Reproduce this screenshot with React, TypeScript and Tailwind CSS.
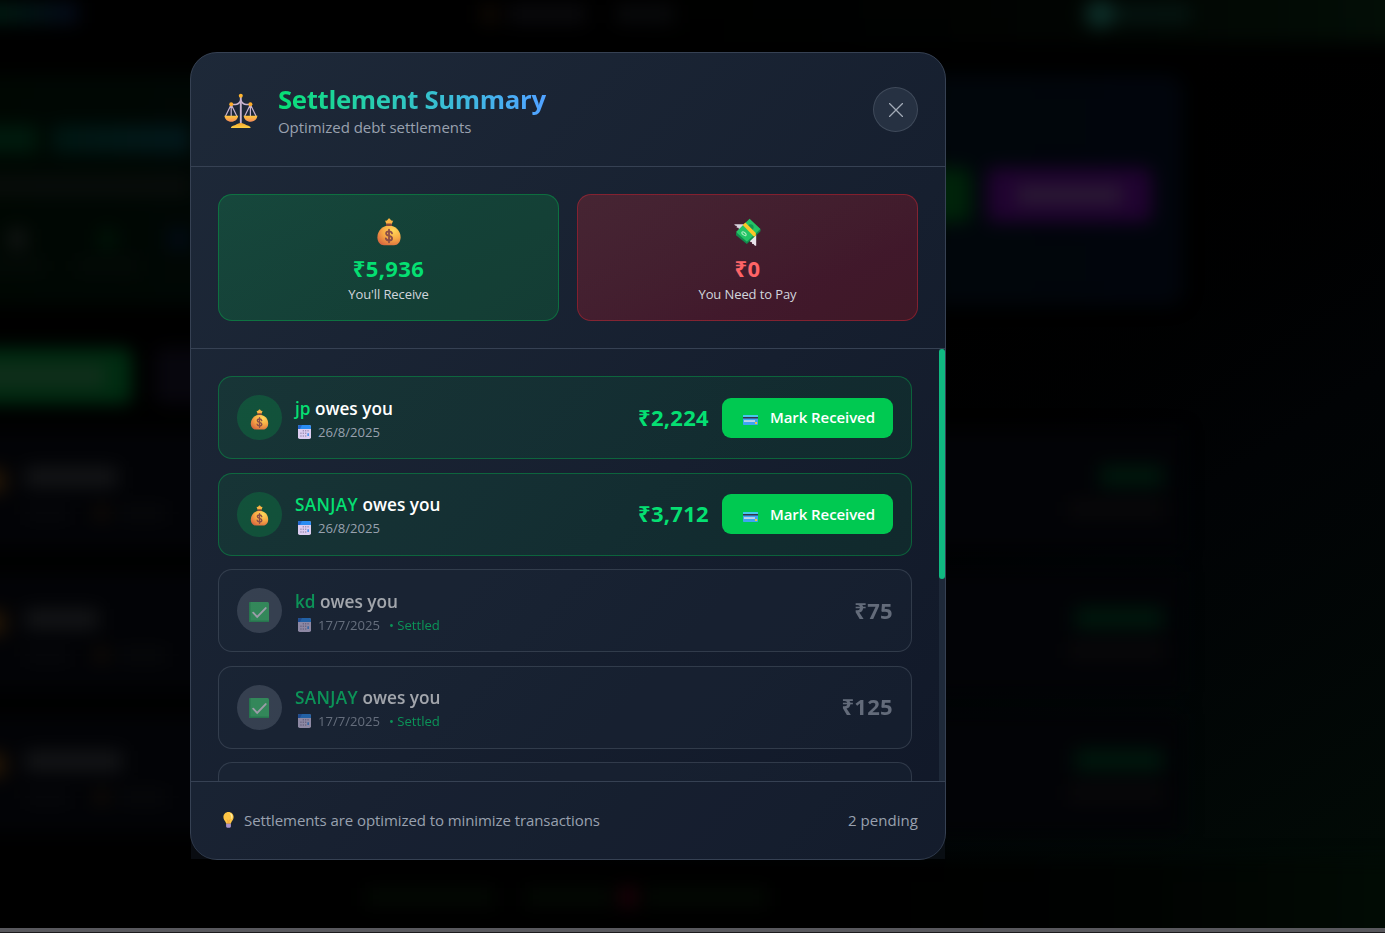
import React from "react";
import clsx from "clsx";

function Scales() {
  return (
    <svg width="34" height="36" viewBox="0 0 34 36" className="block shrink-0">
      <defs>
        <linearGradient id="sc-gold" x1="0" y1="0" x2="0" y2="1">
          <stop offset="0" stopColor="#ffc83d" />
          <stop offset="1" stopColor="#f58b5b" />
        </linearGradient>
        <linearGradient id="sc-base" x1="0" y1="0" x2="0" y2="1">
          <stop offset="0" stopColor="#f5a52c" />
          <stop offset="1" stopColor="#ffd045" />
        </linearGradient>
      </defs>
      <g fill="none" stroke="#c9b3cf" strokeLinecap="round" strokeLinejoin="round">
        <path d="M16.8 4v26.5" strokeWidth="1.9" />
        <path d="M8 11.5h3.3c2.6 0 4.2-1.6 5.5-4.2 1.3 2.6 2.9 4.2 5.5 4.2H26" strokeWidth="1.5" />
        <path d="M7.2 11.5 1.6 23M7.2 11.5 12.8 23M7.2 12v10.5M26.4 11.5 20.8 23M26.4 11.5 32 23M26.4 12v10.5" strokeWidth="1.2" />
      </g>
      <path d="M.4 22.800h13.800c-.5 3.800-3.300 6-6.900 6S.9 26.600.4 22.800zM19.600 22.800h13.800c-.5 3.800-3.300 6-6.900 6s-6.400-2.200-6.900-6z" fill="url(#sc-gold)" />
      <path d="M7 35c0-2 2.500-2.200 4.400-3 1.600-.8 3-2 5.400-2s3.800 1.200 5.400 2c1.900.8 4.400 1 4.400 3z" fill="url(#sc-base)" />
      <circle cx="16.800" cy="2.800" r="2" fill="#ffb52e" />
      <circle cx="7.200" cy="11.300" r="2" fill="#fbab2a" />
      <circle cx="26.400" cy="11.300" r="2" fill="#fbab2a" />
    </svg>
  );
}

function MoneyBag({ size }: { size: number }) {
  return (
    <svg width={size} height={size} viewBox="0 0 28 28" className="block shrink-0">
      <defs>
        <radialGradient id="bag" cx="0.68" cy="0.25" r="0.85">
          <stop offset="0" stopColor="#ffd858" />
          <stop offset="0.5" stopColor="#f8ab45" />
          <stop offset="1" stopColor="#d9683f" />
        </radialGradient>
      </defs>
      <path d="M10 2.400c1 .5 1.800.3 2.400-.3.500-.8.900-1.500 1.700-1.500s1.200.7 1.700 1.500c.6.6 1.400.8 2.400.3l-1.700 4.400h-4.800z" fill="#fbb543" />
      <path d="M14 7.600c6.500 0 11.600 5.300 11.600 11.600 0 4.800-2.900 8-6.500 8H8.900c-3.600 0-6.500-3.200-6.500-8C2.400 12.900 7.500 7.600 14 7.600z" fill="url(#bag)" />
      <rect x="10.900" y="5.600" width="6.200" height="2.400" rx="1.100" fill="#8a4b3c" />
      <path d="M17 15.400c-.3-1.300-1.400-2.100-3-2.100-1.700 0-2.900.9-2.900 2.200 0 3.200 6 1.400 6 4.700 0 1.400-1.300 2.300-3.100 2.300-1.700 0-2.900-.8-3.200-2.200M14 11.600v12.700" fill="none" stroke="#8b4d48" strokeWidth="1.800" strokeLinecap="round" />
    </svg>
  );
}

function WingedMoney() {
  return (
    <svg width="27" height="28" viewBox="0 0 27 28" className="block shrink-0">
      <path d="M.3 6.200h9.500l-3 6.300-2.200-1.200.2-1.300-2.200-.6.300-1.300C1.400 7.800.6 7.100.3 6.200z" fill="#d9d4de" />
      <path d="M22.200 16.200v11.600c-1.500-.1-2.400-.8-2.500-1.900l-1.500.1-.2-1.800-1.700-.2-.3-2.200z" fill="#e8e3ea" />
      <path d="M2 15.300 16.300 2.100l10.200 9.200v2L12.800 26 2 17.300z" fill="#128a4c" />
      <path d="M15.600.8 26.400 11 12.900 23.800 2 14.100z" fill="#23c465" />
      <circle cx="16.600" cy="9.300" r="3" fill="#159652" />
      <ellipse cx="10" cy="15.700" rx="2.500" ry="1.300" transform="rotate(40 10 15.700)" fill="none" stroke="#a9edbd" strokeWidth="1.100" />
      <path d="m8.700 6.900 2.700-2.400L21.800 15v2.700l-1.700 1z" fill="#fdc629" />
    </svg>
  );
}

function Calendar() {
  return (
    <svg width="13" height="14" viewBox="0 0 13 14" className="block shrink-0">
      <rect width="13" height="14" rx="1.800" fill="#dccdf0" />
      <path d="M0 4V1.800A1.800 1.800 0 0 1 1.800 0h9.400A1.800 1.800 0 0 1 13 1.800V4z" fill="#2a8cf2" />
      <path d="M0 4V1.800A1.800 1.800 0 0 1 1.800 0H4L2 4z" fill="#2467cf" />
      <g fill="#a294b8">
        <path d="M4.700 5H6v1.500H4.700zM7 5h1.300v1.500H7zM9.400 5h1.300v1.500H9.400zM2.300 7.600h1.300v1.500H2.300zM4.700 7.600H6v1.500H4.700zM7 7.600h1.300v1.500H7zM2.300 10.300h1.300v1.500H2.300zM4.700 10.300H6v1.500H4.700zM7 10.300h1.300v1.500H7z" />
      </g>
      <path d="M9.400 8.300h1.500v2.600H9.400z" fill="#3f8ff0" />
    </svg>
  );
}

function Card() {
  return (
    <svg width="15" height="10" viewBox="0 0 15 10" className="block shrink-0">
      <rect width="15" height="10" rx="0.800" fill="#3fa4f2" />
      <path d="M0 .8A.8.800 0 0 1 .8 0h13.400a.8.800 0 0 1 .8.800V2H0z" fill="#45c8ec" />
      <path d="M0 2h15v1.500H0z" fill="#35344a" />
      <path d="M1 5.100h11v1.900H1z" fill="#b9d4ea" />
      <path d="M12.100 7h2v2h-2z" fill="#f9c440" />
    </svg>
  );
}

function Check() {
  return (
    <svg width="20" height="20" viewBox="0 0 20 20" className="block shrink-0">
      <rect width="20" height="20" rx="1.500" fill="#46cb76" />
      <path d="M0 1.500V18.500A1.500 1.500 0 0 0 1.500 20H20v-1.500H1.500V0A1.500 1.500 0 0 0 0 1.500z" fill="#32ad62" />
      <path d="m4.200 10.700 4 4.100 8.500-8.700" fill="none" stroke="#f4eef8" strokeWidth="1.900" strokeLinecap="round" />
    </svg>
  );
}

function Bulb() {
  return (
    <svg width="11" height="16" viewBox="0 0 11 16" className="block shrink-0">
      <path d="M5.500 0C8.500 0 10.600 2.200 10.600 5c0 2.200-1.200 3.300-2 4.800-.4.700-.6 1.300-.7 2H3.100c-.1-.7-.3-1.300-.7-2C1.600 8.300.4 7.200.4 5 .4 2.200 2.500 0 5.500 0z" fill="#fdc545" />
      <path d="M6.500 1C8.400 1.400 9.600 2.900 9.500 4.800c0 1.200-.6 2-1.200 2.600C8.500 5 8 2.700 6.500 1z" fill="#fff0a0" />
      <path d="M4 7.500 5 9v2.800h1V9l1-1.500" fill="none" stroke="#f59a35" strokeWidth="0.700" />
      <path d="M3.100 11.800h4.800v2.500c0 1-.8 1.500-2.400 1.500s-2.400-.5-2.400-1.500z" fill="#ab93c9" />
    </svg>
  );
}

function EntryBackdrop({ name, amount }: { name: string; amount: string }) {
  return (
    <div className="mb-[22px] -ml-8 flex h-[120px] w-[1215px] justify-between bg-[#020306] pt-[35px] pr-5">
      <div className="flex">
        <div className="mt-[4px] h-[24px] w-[38px] bg-[#241606]" />
        <div className="ml-[19px] flex flex-col">
          <div className={clsx("mt-[2px] h-[20px] bg-[#141517]", name)} />
          <div className="mt-[20px] flex h-[12px]">
            <div className="w-[45px] bg-[#07080b]" />
            <div className="ml-[25px] w-[12px] bg-[#1a1105]" />
            <div className="ml-[12px] w-[48px] bg-[#08090b]" />
          </div>
        </div>
      </div>
      <div className="flex flex-col items-end">
        <div className={clsx("h-[22px] bg-[#00170c]", amount)} />
        <div className="mt-[14px] h-[16px] w-[95px] bg-[#090809]" />
      </div>
    </div>
  );
}

function Backdrop() {
  return (
    <div className="flex h-[928px] w-full flex-col overflow-hidden bg-linear-to-br from-black from-40% via-[#010305] via-70% to-[#020c06]">
      <div className="flex w-full flex-col blur-[9px]">
        <div className="-mt-8 -mr-8 -ml-8 flex h-[74px] items-start bg-linear-to-r from-black from-30% to-[#030f07] pt-8">
          <div className="mt-[3px] h-[20px] w-[110px] bg-linear-to-r from-[#001c12] from-30% to-[#050a1c]" />
          <div className="mt-[5px] ml-[404px] h-[18px] w-[14px] bg-[#140c05]" />
          <div className="mt-[5px] ml-[12px] h-[18px] w-[78px] bg-[#0a0a0d]" />
          <div className="mt-[5px] ml-[30px] h-[18px] w-[58px] bg-[#090a0c]" />
          <div className="ml-[411px] h-[28px] w-[30px] rounded-full bg-[#0d2f29]" />
          <div className="mt-[4px] h-[20px] w-[76px] bg-[#051410]" />
        </div>
        <div className="mt-[33px] -ml-8 flex h-[230px] w-[1215px] justify-between rounded-r-2xl bg-linear-to-r from-[#000702] via-[#010708] to-[#01050c]">
          <div className="flex w-[222px] flex-col">
            <div className="mt-[50px] flex h-[28px] gap-[14px]">
              <div className="w-[70px] bg-[#001a0d]" />
              <div className="w-[138px] bg-linear-to-r from-[#001712] to-[#03181c]" />
            </div>
            <div className="mt-[24px] h-[18px] w-full bg-[#090d0b]" />
            <div className="mt-[34px] flex h-[20px]">
              <div className="ml-[40px] w-[18px] bg-[#121514]" />
              <div className="ml-[73px] w-[18px] bg-[#001507]" />
              <div className="ml-[52px] w-[22px] bg-[#020b16]" />
            </div>
            <div className="mt-[10px] flex h-[14px] gap-[30px]">
              <div className="w-[77px] bg-[#040a07]" />
              <div className="w-[64px] bg-[#040a07]" />
            </div>
          </div>
          <div className="mt-[93px] mr-[31px] flex h-[54px] gap-[16px]">
            <div className="w-[110px] rounded-lg bg-[#00230a]" />
            <div className="flex w-[165px] items-center justify-center rounded-lg bg-[#200330]">
              <div className="h-[18px] w-[105px] bg-[#2a1b33]" />
            </div>
          </div>
        </div>
        <div className="mt-[43px] -ml-8 flex h-[56px] gap-[23px]">
          <div className="flex w-[164px] items-center rounded-r-lg bg-[#002c11]">
            <div className="h-[22px] w-[137px] bg-[#112d1b]" />
          </div>
          <div className="w-[120px] rounded-lg bg-[#07060d]" />
        </div>
        <div className="mt-[26px] flex flex-col">
          <EntryBackdrop name="w-[92px]" amount="w-[63px]" />
          <EntryBackdrop name="w-[73px]" amount="w-[88px]" />
          <EntryBackdrop name="w-[97px]" amount="w-[88px]" />
        </div>
        <div className="mt-[4px] -mr-8 flex h-[100px] bg-linear-to-r from-black from-50% to-[#010d05]">
          <div className="mt-[28px] ml-[365px] h-[18px] w-[130px] bg-[#030903]" />
          <div className="mt-[28px] ml-[30px] h-[18px] w-[87px] bg-[#030903]" />
          <div className="mt-[28px] ml-[8px] h-[18px] w-[16px] bg-[#22030a]" />
          <div className="mt-[28px] ml-[9px] h-[18px] w-[122px] bg-[#030903]" />
        </div>
      </div>
    </div>
  );
}

type Entry = { name: string; tracking: string; date: string; amount: string; settled?: boolean };

const entries: Entry[] = [
  { name: "jp", tracking: "", date: "26/8/2025", amount: "₹2,224" },
  { name: "SANJAY", tracking: "tracking-[0.35px]", date: "26/8/2025", amount: "₹3,712" },
  { name: "kd", tracking: "", date: "17/7/2025", amount: "₹75", settled: true },
  { name: "SANJAY", tracking: "tracking-[0.35px]", date: "17/7/2025", amount: "₹125", settled: true },
];

function EntryRow({ name, tracking, date, amount, settled }: Entry) {
  return (
    <div
      className={clsx(
        "flex h-[83px] shrink-0 items-center rounded-[14px] border px-[18px]",
        settled ? "border-gray-600/90 bg-gray-800/50 opacity-60" : "border-green-500/35 bg-linear-to-r from-green-500/10 to-green-600/10",
      )}
    >
      <div className={clsx("flex size-[45px] items-center justify-center rounded-full", settled ? "bg-gray-600" : "bg-green-500/20")}>
        {settled ? <div className="pt-[2px] pr-[1px]"><Check /></div> : <div className="pt-[3px]"><MoneyBag size={21} /></div>}
      </div>
      <div className="ml-[13px] flex grow flex-col pt-[2px]">
        <div className="h-[25px] text-[17.200px] leading-[25px] font-semibold whitespace-pre text-white">
          <span className={clsx("text-green-400", tracking)}>{name}</span> owes you
        </div>
        <div className="flex h-[21px] items-center pt-[1px] pl-[3px] text-[13.100px] leading-[20px] text-gray-400">
          <Calendar />
          <span className="ml-[7px]">{date}</span>
          {settled && <span className="ml-[9px] text-green-400">• Settled</span>}
        </div>
      </div>
      <div className={clsx("pb-[2px] text-[22px] leading-[30px] font-bold tracking-[0.3px]", settled ? "text-gray-400" : "text-green-400")}>{amount}</div>
      {!settled && (
        <button className="ml-[13px] flex h-[40px] w-[171px] items-center rounded-[9px] bg-green-500 pl-[21px] text-[15px] font-semibold text-white">
          <div className="pt-[5px]"><Card /></div>
          <span className="ml-[12px] tracking-[-0.080px] whitespace-nowrap">Mark Received</span>
        </button>
      )}
    </div>
  );
}

export default function App() {
  return (
    <div className="relative h-[933px] w-full overflow-hidden bg-[#1c1b1e] font-['Open_Sans','Noto_Sans',sans-serif]">
      <Backdrop />
      <div className="h-[4px] bg-[#58585d]" />

      <div className="absolute inset-0 pt-[52px] pl-[190px]">
        <div className="flex h-[808px] w-[756px] flex-col rounded-[27px] border border-gray-700 bg-linear-to-br from-gray-800 to-gray-900">
          <header className="flex h-[114px] items-center border-b border-gray-700 px-[27px]">
            <div className="w-[60px] pt-[2px] pl-[6px]"><Scales /></div>
            <div className="flex grow flex-col items-start pt-[2px]">
              <h2 className="h-[32px] bg-linear-to-r from-green-400 to-blue-400 bg-clip-text text-[25.800px] leading-[32px] font-bold tracking-[-0.36px] whitespace-nowrap text-transparent">
                Settlement Summary
              </h2>
              <p className="h-[24px] text-[15px] leading-[24px] tracking-[-0.05px] text-gray-400">Optimized debt settlements</p>
            </div>
            <button className="flex size-[45px] items-center justify-center rounded-full border border-gray-600/70 bg-gray-700/50">
              <svg width="14" height="14" viewBox="0 0 14 14" fill="none" stroke="#a3abb7" strokeWidth="1.300" strokeLinecap="round">
                <path d="M.5.500l13 13M13.500.500l-13 13" />
              </svg>
            </button>
          </header>

          <section className="flex h-[182px] gap-[18px] border-b border-gray-700 p-[27px]">
            <div className="flex h-[127px] flex-1 flex-col items-center rounded-[14px] border border-green-500/35 bg-linear-to-br from-green-500/20 to-green-600/20 pt-[23px]">
              <MoneyBag size={28} />
              <div className="mt-[7px] h-[30px] text-[22px] leading-[30px] font-bold tracking-[0.35px] text-green-400">₹5,936</div>
              <div className="mt-[1px] h-[20px] text-[13px] leading-[20px] tracking-[-0.1px] text-gray-300">You'll Receive</div>
            </div>
            <div className="flex h-[127px] flex-1 flex-col items-center rounded-[14px] border border-red-500/35 bg-linear-to-br from-red-500/20 to-red-600/20 pt-[23px]">
              <div className="pr-[1px]"><WingedMoney /></div>
              <div className="mt-[7px] h-[30px] text-[22px] leading-[30px] font-bold tracking-[0.35px] text-red-400">₹0</div>
              <div className="mt-[1px] h-[20px] text-[13px] leading-[20px] tracking-[-0.1px] text-gray-300">You Need to Pay</div>
            </div>
          </section>

          <section className="flex h-[432px] overflow-hidden">
            <div className="flex grow flex-col gap-[13.500px] px-[27px] pt-[27px]">
              {entries.map((e, i) => (
                <EntryRow key={i} {...e} />
              ))}
              <div className="grow rounded-t-[14px] border border-b-0 border-gray-600/90 bg-gray-800/50 opacity-60" />
            </div>
            <div className="w-[6px] shrink-0 bg-gray-800">
              <div className="h-[230px] w-[6px] rounded-full bg-[#10b981]" />
            </div>
          </section>

          <footer className="flex h-[78px] items-center border-t border-gray-700 bg-gray-800/30 px-[27px] pb-[2px] text-[15px] leading-[24px] text-gray-400">
            <div className="pl-[5px]"><Bulb /></div>
            <span className="ml-[10px] grow tracking-[-0.080px]">Settlements are optimized to minimize transactions</span>
            <span className="tracking-[0.050px]">2 pending</span>
          </footer>
        </div>
      </div>
    </div>
  );
}
